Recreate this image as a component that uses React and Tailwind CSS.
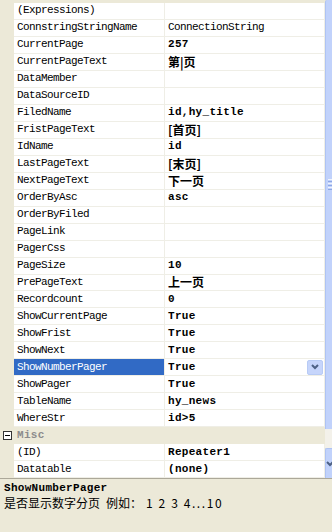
import React from 'react'

const props = [
  ['(Expressions)', ''],
  ['ConnstringStringName', 'ConnectionString', 'plain'],
  ['CurrentPage', '257'],
  ['CurrentPageText', '第|页'],
  ['DataMember', ''],
  ['DataSourceID', ''],
  ['FiledName', 'id,hy_title'],
  ['FristPageText', '[首页]'],
  ['IdName', 'id'],
  ['LastPageText', '[末页]'],
  ['NextPageText', '下一页'],
  ['OrderByAsc', 'asc'],
  ['OrderByFiled', ''],
  ['PageLink', ''],
  ['PagerCss', ''],
  ['PageSize', '10'],
  ['PrePageText', '上一页'],
  ['Recordcount', '0'],
  ['ShowCurrentPage', 'True'],
  ['ShowFrist', 'True'],
  ['ShowNext', 'True'],
  ['ShowNumberPager', 'True', 'selected'],
  ['ShowPager', 'True'],
  ['TableName', 'hy_news'],
  ['WhereStr', 'id>5'],
]

const misc = [
  ['(ID)', 'Repeater1'],
  ['Datatable', '(none)'],
]

const hasCjk = s => /[\u4e00-\u9fff]/.test(s)

function Value({ text, plain }) {
  if (!text) return null
  if (hasCjk(text)) {
    return (
      <span className="font-['Noto_Sans_CJK_SC',sans-serif] text-[12px] font-bold leading-none">
        {text}
      </span>
    )
  }
  return (
    <span
      className={
        plain
          ? "font-['Liberation_Mono',monospace] text-[11px] tracking-[-0.6px] leading-none"
          : "font-['Liberation_Mono',monospace] text-[11px] font-bold tracking-[0.3px] leading-none"
      }
    >
      {text}
    </span>
  )
}

function Row({ name, value, flag }) {
  const selected = flag === 'selected'
  return (
    <div className="flex h-[17px]">
      <div className="w-[14px] shrink-0 bg-[#ece9d8]" />
      <div
        className={
          'w-[151px] shrink-0 border-b border-r border-[#efeee6] pl-[3px] flex items-center ' +
          (selected ? 'bg-[#316ac5] text-white' : 'bg-white text-black')
        }
      >
        <span className="font-['Liberation_Mono',monospace] text-[11px] tracking-[-0.6px] leading-none">
          {name}
        </span>
      </div>
      <div className="flex-1 border-b border-r border-[#efeee6] bg-white pl-[3px] flex items-center justify-between">
        <Value text={value} plain={flag === 'plain'} />
        {selected && (
          <div className="mr-[1px] w-[16px] h-[15px] rounded-[2px] bg-[#c6d5fb] border border-[#b8cbf5] flex items-center justify-center">
            <svg width="8" height="6" viewBox="0 0 8 6">
              <path d="M1 1 L4 4 L7 1" stroke="#4d6185" strokeWidth="2" fill="none" />
            </svg>
          </div>
        )}
      </div>
    </div>
  )
}

export default function App() {
  return (
    <div className="w-[332px] h-[532px] overflow-hidden bg-[#ece9d8] flex flex-col">
      <div className="h-[478px] flex overflow-hidden">
        <div className="w-[325px] shrink-0 flex flex-col overflow-hidden">
          <div className="h-[3px] shrink-0 bg-[#ece9d8]" />
          {props.map(([n, v, f]) => (
            <Row key={n} name={n} value={v} flag={f} />
          ))}
          <div className="flex h-[17px] shrink-0 items-center bg-[#ece9d8]">
            <div className="w-[14px] flex items-center justify-center">
              <div className="w-[9px] h-[9px] border border-[#333] bg-white flex items-center justify-center">
                <div className="w-[5px] h-[1px] bg-black" />
              </div>
            </div>
            <span className="pl-[3px] font-['Liberation_Mono',monospace] text-[11px] font-bold text-[#8c8c8c] tracking-[0.3px] leading-none">
              Misc
            </span>
          </div>
          {misc.map(([n, v]) => (
            <Row key={n} name={n} value={v} />
          ))}
        </div>
        <div className="flex-1 flex flex-col">
          <div className="h-[429px] bg-[#c1d2fb] border-l border-[#aec3f3] rounded-tl-[2px] flex items-center">
            <div className="mt-[-60px] flex flex-col gap-[1px] pl-[2px] w-full">
              <div className="h-[1px] bg-[#eef3fe]" />
              <div className="h-[1px] bg-[#8ea7e4]" />
              <div className="h-[1px] bg-[#eef3fe]" />
              <div className="h-[1px] bg-[#8ea7e4]" />
              <div className="h-[1px] bg-[#eef3fe]" />
              <div className="h-[1px] bg-[#8ea7e4]" />
            </div>
          </div>
          <div className="h-[19px] bg-[#f3f1ea]" />
          <div className="flex-1 bg-[#c1d2fb] border-l border-t border-[#aec3f3] rounded-tl-[2px] flex items-center">
            <svg width="7" height="6" viewBox="0 0 7 6">
              <path d="M1 1 L4 4 L7 1" stroke="#4d6185" strokeWidth="2" fill="none" />
            </svg>
          </div>
        </div>
      </div>
      <div className="border-t border-[#aca899] flex-1 px-[4px] pt-[2px]">
        <div className="font-['Liberation_Mono',monospace] text-[11px] font-bold tracking-[0.3px] leading-[14px]">
          ShowNumberPager
        </div>
        <div className="flex font-['Noto_Sans_CJK_SC',sans-serif] text-[12px] leading-[16px]">
          <span>是否显示数字分页</span>
          <span className="ml-[6px]">例如：</span>
          <span className="ml-[4px] tracking-[1.6px]">1 2 3 4...10</span>
        </div>
      </div>
    </div>
  )
}
